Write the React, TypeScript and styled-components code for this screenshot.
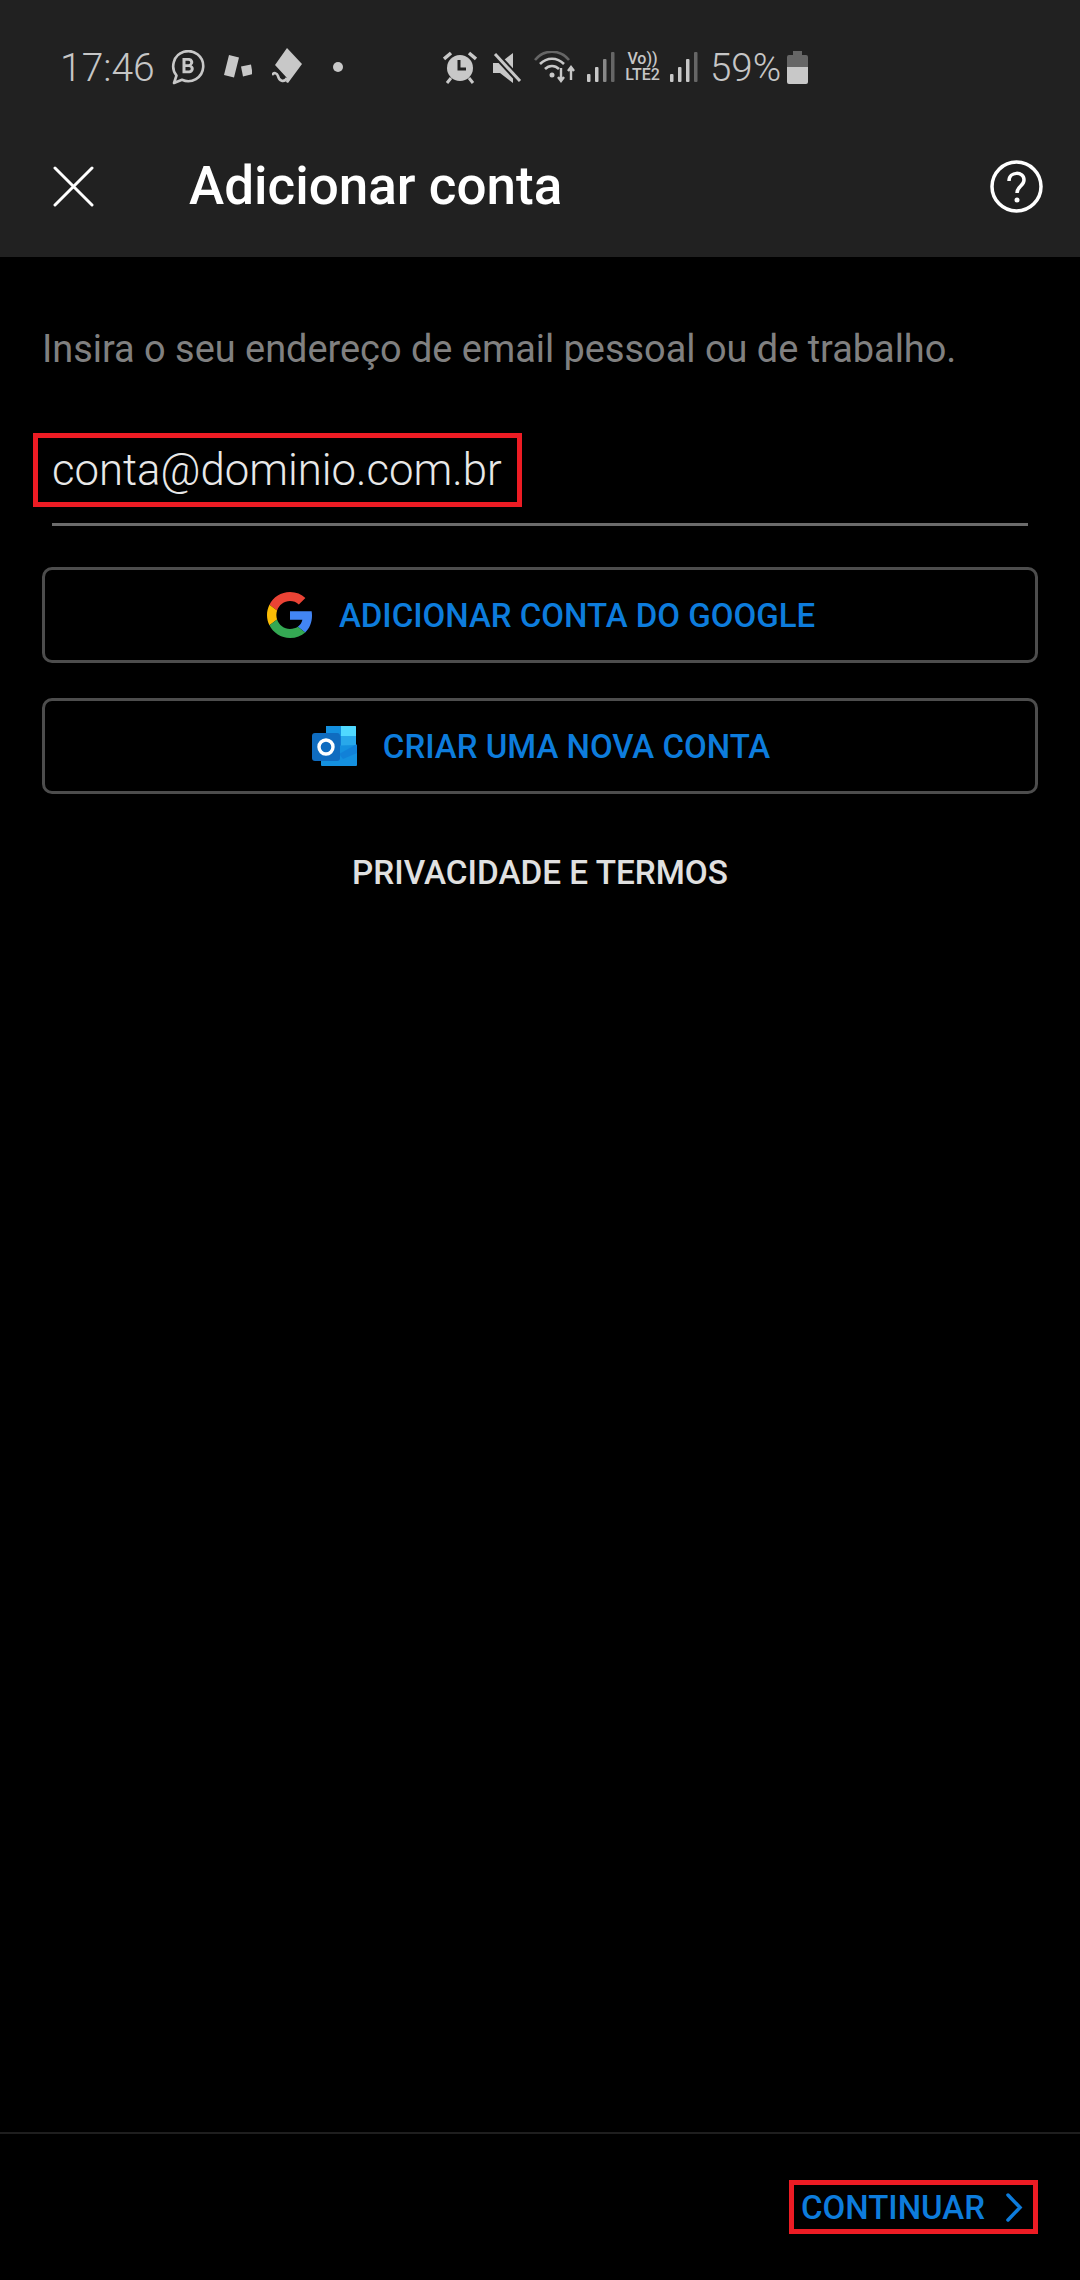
import React from "react";
import styled, { createGlobalStyle } from "styled-components";

const Global = createGlobalStyle`
  html, body { margin: 0; padding: 0; background: #000; }
  body { font-family: Roboto, "Liberation Sans", sans-serif; }
`;

const Page = styled.div`
  width: 1080px;
  height: 2280px;
  display: flex;
  flex-direction: column;
  background: #000;
  overflow: hidden;
`;

const Header = styled.header`
  height: 257px;
  background: #212121;
  display: flex;
  flex-direction: column;
`;

const StatusBar = styled.div`
  height: 134px;
  padding: 0 0 0 60px;
  display: flex;
  align-items: center;
  box-sizing: border-box;
  color: #c6c6c6;
`;

const Clock = styled.span`
  font-size: 39px;
  font-weight: 300;
  width: 93px;
  line-height: 1;
  white-space: nowrap;
  margin-top: 2px;
`;

const StatusIcon = styled.svg<{ $gap: number }>`
  flex: none;
  display: block;
  margin-left: ${(p) => p.$gap}px;
`;

const Network = styled.span`
  margin-left: 7px;
  width: 41px;
  flex: none;
  display: flex;
  flex-direction: column;
  align-items: center;
  font-size: 16px;
  font-weight: 500;
  line-height: 16px;
`;

const Battery = styled.span`
  margin-left: 12px;
  width: 70px;
  font-size: 38.500px;
  font-weight: 300;
  line-height: 1;
  flex: none;
  white-space: nowrap;
  margin-top: 2px;
`;

const Toolbar = styled.div`
  flex: 1;
  display: flex;
  align-items: center;
  padding: 0 37px 0 53px;
  margin-top: -18px;
`;

const Title = styled.h1`
  margin: 0 0 0 95px;
  flex: 1;
  color: #fff;
  font-size: 53px;
  font-weight: 500;
  line-height: 1;
`;

const Content = styled.main`
  flex: 1;
  padding: 0 42px;
  display: flex;
  flex-direction: column;
`;

const Prompt = styled.p`
  margin: 70px 0 0 0;
  color: #808080;
  font-size: 37.900px;
  line-height: 44px;
  white-space: nowrap;
`;

const Highlight = styled.div`
  align-self: flex-start;
  margin: 62px 0 0 -9px;
  height: 74px;
  width: 489px;
  box-sizing: border-box;
  border: 5px solid #ed1c24;
  padding-left: 14px;
  display: flex;
  align-items: center;
  color: #e8e8e8;
  font-size: 43.700px;
  font-weight: 350;
  white-space: nowrap;
`;

const Underline = styled.div`
  height: 3px;
  margin: 16px 10px 0 10px;
  background: #6b6b6b;
`;

const OutlineButton = styled.button<{ $top: number }>`
  margin-top: ${(p) => p.$top}px;
  height: 96px;
  box-sizing: border-box;
  border: 3px solid #4d4d4d;
  border-radius: 10px;
  background: transparent;
  display: flex;
  align-items: center;
  justify-content: center;
  gap: 26px;
  color: #0d7cdc;
  font-family: inherit;
  font-size: 33px;
  font-weight: 500;
  padding: 0 0 0 2px;
`;

const PrivacyLink = styled.div`
  margin-top: 59px;
  text-align: center;
  color: #e0e0e0;
  font-size: 33.300px;
  font-weight: 500;
  line-height: 40px;
`;

const Footer = styled.footer`
  height: 148px;
  border-top: 2px solid #1e1e1e;
  box-sizing: border-box;
  display: flex;
  justify-content: flex-end;
  padding: 46px 42px 0 0;
`;

const ContinueBox = styled.div`
  height: 54px;
  width: 249px;
  box-sizing: border-box;
  border: 5px solid #ed1c24;
  padding-left: 7px;
  display: flex;
  align-items: center;
  color: #0d7cdc;
  font-size: 33px;
  font-weight: 500;
  white-space: nowrap;
`;

const Chevron = styled.svg`
  margin-left: 20px;
  flex: none;
`;

const Signal = ({ gap, third }: { gap: number; third: string }) => (
  <StatusIcon $gap={gap} width="28" height="30" viewBox="0 0 28 30">
    <rect x="0" y="22" width="3.500" height="8" rx="1" fill="#c8c8c8" />
    <rect x="8" y="15" width="3.500" height="15" rx="1" fill="#c8c8c8" />
    <rect x="16" y="7" width="3.500" height="23" rx="1" fill={third} />
    <rect x="24" y="0" width="3.500" height="30" rx="1" fill="#666" />
  </StatusIcon>
);

export default function App() {
  return (
    <Page>
      <Global />
      <Header>
        <StatusBar>
          <Clock>17:46</Clock>
          <StatusIcon $gap={18} width="34" height="35" viewBox="0 0 34 35">
            <path d="M3 33l2.500-7.500A15 15 0 1 1 11 29.800z" fill="none" stroke="#c8c8c8" strokeWidth="2.600" strokeLinejoin="round" />
            <path d="M11.500 8h6.500a4 4 0 0 1 2.600 7.200 4.300 4.300 0 0 1-2.300 8h-6.800z M14.500 10.800v3.500h3a1.750 1.750 0 0 0 0-3.500z M14.500 17v3.500h3.500a1.750 1.750 0 0 0 0-3.500z" fill="#c8c8c8" fillRule="evenodd" />
          </StatusIcon>
          <StatusIcon $gap={19} width="28" height="24" viewBox="0 0 28 24">
            <path d="M5 0l10 2.500-5 20-10-2.500z" fill="#c8c8c8" />
            <path d="M17 11.500l10-2 1.600 9.500-9.600 2.500z" fill="#c8c8c8" />
          </StatusIcon>
          <StatusIcon $gap={20} width="30" height="38" viewBox="0 0 30 38">
            <path d="M15 0l15 16-14 19-2-1 1-4-12-13z" fill="#c8c8c8" />
            <path d="M0 27c2-3 5-2 6 1 1 5 6 7 9 2" fill="none" stroke="#c8c8c8" strokeWidth="2.600" />
          </StatusIcon>
          <StatusIcon $gap={31} width="10" height="10" viewBox="0 0 10 10">
            <circle cx="5" cy="5" r="5" fill="#c8c8c8" />
          </StatusIcon>
          <StatusIcon $gap={100} width="34" height="33" viewBox="0 0 34 33">
            <circle cx="17" cy="17" r="13" fill="#c8c8c8" />
            <path d="M16 9v9h7" fill="none" stroke="#212121" strokeWidth="3" />
            <path d="M1 8l7-6M33 8l-7-6" stroke="#c8c8c8" strokeWidth="3.500" />
            <path d="M8 27l-4 5M26 27l4 5" stroke="#c8c8c8" strokeWidth="3" />
          </StatusIcon>
          <StatusIcon $gap={15} width="30" height="31" viewBox="0 0 30 31">
            <path d="M1 11h7l13-10v30L8 21H1z" fill="#c8c8c8" />
            <path d="M1 0l28 30" stroke="#212121" strokeWidth="7" />
            <path d="M3 2l25 27" stroke="#c8c8c8" strokeWidth="3" />
          </StatusIcon>
          <StatusIcon $gap={12} width="42" height="32" viewBox="0 0 42 32">
            <path d="M1 9c9-11 25-11 34 0" fill="none" stroke="#666" strokeWidth="2.600" />
            <path d="M6 13c7-7 17-7 24 0" fill="none" stroke="#c8c8c8" strokeWidth="2.600" />
            <path d="M11 18c4-4 10-4 14 0" fill="none" stroke="#c8c8c8" strokeWidth="2.600" />
            <circle cx="18" cy="24" r="2.500" fill="#c8c8c8" />
            <path d="M27 17v12M24 26l3 4 3-4" fill="none" stroke="#c8c8c8" strokeWidth="2.400" />
            <path d="M37 29V17M34 20l3-4 3 4" fill="none" stroke="#c8c8c8" strokeWidth="2.400" />
          </StatusIcon>
          <Signal gap={11} third="#888" />
          <Network>
            <span>Vo))</span>
            <span>LTE2</span>
          </Network>
          <Signal gap={7} third="#c8c8c8" />
          <Battery>59%</Battery>
          <StatusIcon $gap={7} width="21" height="33" viewBox="0 0 21 33">
            <path d="M6 0h9v4h4a2 2 0 0 1 2 2v10H0V6a2 2 0 0 1 2-2h4z" fill="#666" />
            <path d="M0 16h21v15a2 2 0 0 1-2 2H2a2 2 0 0 1-2-2z" fill="#c8c8c8" />
          </StatusIcon>
        </StatusBar>
        <Toolbar>
          <svg width="41" height="41" viewBox="0 0 41 41">
            <path d="M2 2l37 37M39 2L2 39" stroke="#fff" strokeWidth="3" strokeLinecap="round" />
          </svg>
          <Title>Adicionar conta</Title>
          <svg width="53" height="53" viewBox="0 0 53 53">
            <circle cx="26.500" cy="26.500" r="24.500" fill="none" stroke="#fff" strokeWidth="3.500" />
            <path d="M19 21c0-10 15-10 15-1 0 6-7 6-7 13" fill="none" stroke="#fff" strokeWidth="3.500" />
            <circle cx="27" cy="40" r="2.500" fill="#fff" />
          </svg>
        </Toolbar>
      </Header>
      <Content>
        <Prompt>Insira o seu endereço de email pessoal ou de trabalho.</Prompt>
        <Highlight>conta@dominio.com.br</Highlight>
        <Underline />
        <OutlineButton $top={41}>
          <svg width="46" height="46" viewBox="0 0 48 48">
            <path fill="#EA4335" d="M24 9.500c3.540 0 6.710 1.220 9.210 3.600l6.850-6.850C35.900 2.380 30.470 0 24 0 14.620 0 6.510 5.380 2.560 13.220l7.980 6.190C12.430 13.720 17.740 9.500 24 9.500z" />
            <path fill="#4285F4" d="M46.980 24.550c0-1.570-.15-3.090-.38-4.550H24v9.020h12.940c-.58 2.960-2.260 5.480-4.780 7.180l7.730 6c4.510-4.180 7.090-10.360 7.090-17.650z" />
            <path fill="#FBBC05" d="M10.530 28.590c-.48-1.450-.76-2.990-.76-4.590s.27-3.140.76-4.590l-7.980-6.190C.92 16.460 0 20.120 0 24c0 3.880.92 7.540 2.560 10.780l7.970-6.190z" />
            <path fill="#34A853" d="M24 48c6.480 0 11.930-2.130 15.890-5.810l-7.730-6c-2.150 1.450-4.920 2.300-8.160 2.300-6.260 0-11.570-4.220-13.470-9.910l-7.980 6.190C6.510 42.620 14.620 48 24 48z" />
          </svg>
          ADICIONAR CONTA DO GOOGLE
        </OutlineButton>
        <OutlineButton $top={35}>
          <svg width="45" height="40" viewBox="0 0 45 40">
            <path d="M14 0h29a1 1 0 0 1 1 1v19H14z" fill="#1490df" />
            <path d="M29 0h14a1 1 0 0 1 1 1v9H29z" fill="#50d9ff" />
            <path d="M14 10h15v10H14z" fill="#0f78d4" />
            <path d="M29 10h15v10H29z" fill="#28a8ea" />
            <path d="M9 20l36-1v20a1 1 0 0 1-1 1H10a1 1 0 0 1-1-1z" fill="#1490df" />
            <path d="M27 28l18-10v9L31 33z" fill="#0f78d4" opacity="0.6" />
            <rect x="0" y="7" width="28" height="28" rx="3" fill="#0f6cc0" />
            <circle cx="14" cy="21" r="7" fill="none" stroke="#fff" strokeWidth="3.400" />
          </svg>
          CRIAR UMA NOVA CONTA
        </OutlineButton>
        <PrivacyLink>PRIVACIDADE E TERMOS</PrivacyLink>
      </Content>
      <Footer>
        <ContinueBox>
          CONTINUAR
          <Chevron width="18" height="29" viewBox="0 0 18 29">
            <path d="M3 2l12 12.500L3 27" fill="none" stroke="#0d7cdc" strokeWidth="3.500" strokeLinecap="round" />
          </Chevron>
        </ContinueBox>
      </Footer>
    </Page>
  );
}
